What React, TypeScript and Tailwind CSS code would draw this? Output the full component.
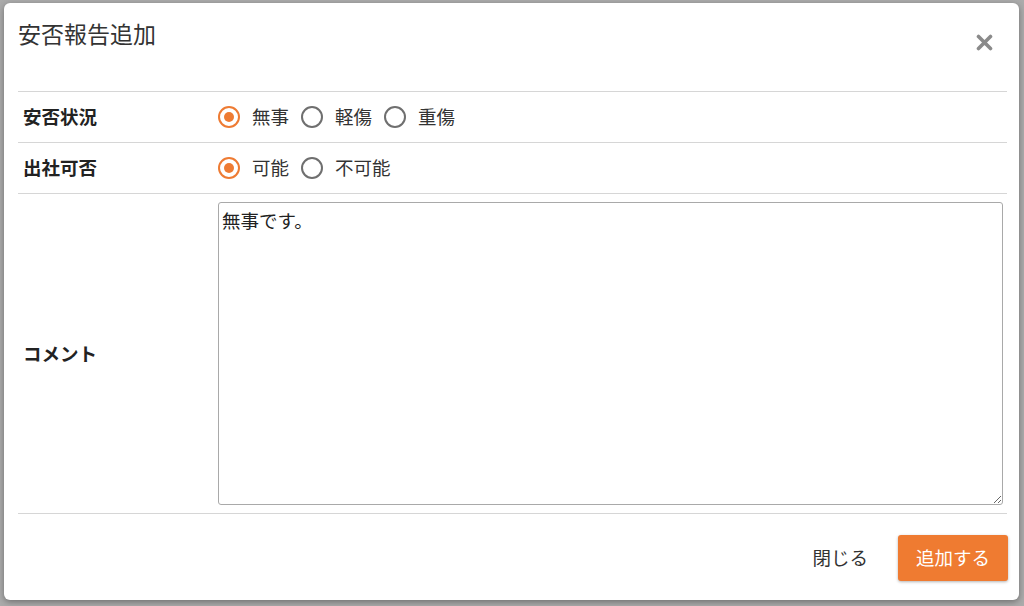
import React from "react";

const font = { fontFamily: '"Noto Sans CJK JP", "Noto Sans", sans-serif' };

function Radio({ checked, label }: { checked: boolean; label: string }) {
  return (
    <label className="flex items-center">
      <span
        className={
          checked
            ? "w-[22px] h-[22px] rounded-full border-[2.5px] border-[#ee7b33] flex items-center justify-center"
            : "w-[22px] h-[22px] rounded-full border-2 border-[#6f6f6f] flex items-center justify-center"
        }
      >
        {checked && <span className="w-[10px] h-[10px] rounded-full bg-[#ee7b33]" />}
      </span>
      <span className="ml-[12px] mr-[12px] text-[18.5px] text-[#333]">{label}</span>
    </label>
  );
}

export default function App() {
  return (
    <div className="w-[1024px] h-[606px] bg-[#ababab] pt-[3px] pl-[4px] overflow-hidden" style={font}>
      <div className="w-[1015px] h-[597px] bg-white rounded-[6px] shadow-[0_2px_6px_rgba(0,0,0,0.35)] flex flex-col">
        <div className="h-[88px] pl-[14px] pr-[26px] flex items-start justify-between">
          <h1 className="mt-[14px] text-[23px] leading-[32px] text-[#333] font-normal">安否報告追加</h1>
          <svg className="mt-[31px]" width="17" height="17" viewBox="0 0 17 17">
            <path d="M2.5 2.5 L14.5 14.5 M14.5 2.5 L2.5 14.5" stroke="#8a8a8a" strokeWidth="3.6" strokeLinecap="round" />
          </svg>
        </div>
        <div className="ml-[14px] mr-[12px] flex flex-col">
          <div className="h-[51px] border-t border-[#d6d6d6] flex items-center">
            <div className="w-[200px] pl-[5px] text-[18.5px] font-bold text-[#222]">安否状況</div>
            <div className="flex items-center">
              <Radio checked label="無事" />
              <Radio checked={false} label="軽傷" />
              <Radio checked={false} label="重傷" />
            </div>
          </div>
          <div className="h-[51px] border-t border-[#d6d6d6] flex items-center">
            <div className="w-[200px] pl-[5px] text-[18.5px] font-bold text-[#222]">出社可否</div>
            <div className="flex items-center">
              <Radio checked label="可能" />
              <Radio checked={false} label="不可能" />
            </div>
          </div>
          <div className="h-[321px] border-t border-b border-[#d6d6d6] flex items-center">
            <div className="w-[200px] pl-[5px] text-[18.5px] font-bold text-[#222]">コメント</div>
            <textarea
              className="w-[785px] h-[303px] border border-[#a9a9a9] rounded-[3px] px-[3px] py-[4px] text-[18.5px] leading-[26px] text-[#222] outline-none"
              style={font}
              defaultValue="無事です。"
            />
          </div>
        </div>
        <div className="flex items-center justify-end pr-[11px] pt-[21px] gap-[30px]">
          <button className="text-[18.5px] text-[#333]">閉じる</button>
          <button className="w-[110px] h-[46px] rounded-[3px] bg-[#ef7b31] text-white text-[18.5px] shadow-[0_1px_3px_rgba(0,0,0,0.3)]">
            追加する
          </button>
        </div>
      </div>
    </div>
  );
}
